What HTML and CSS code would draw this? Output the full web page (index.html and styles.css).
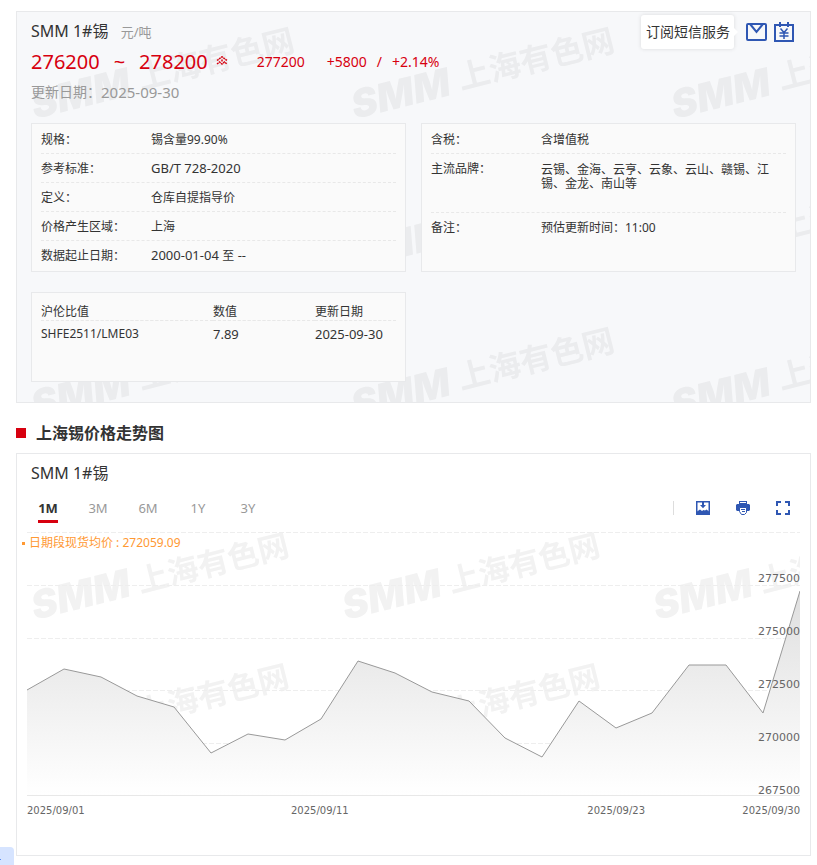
FILE: index.html
```html
<!DOCTYPE html>
<html lang="zh-CN">
<head>
<meta charset="utf-8">
<title>SMM 1#锡</title>
<link rel="stylesheet" href="styles.css">
</head>
<body>
<main class="page">
  <section class="card quote">
    <svg class="watermark" aria-hidden="true">
      <defs>
        <pattern id="mark-quote" width="320" height="150" patternUnits="userSpaceOnUse">
          <g transform="translate(18 107) rotate(-14)" fill="#ebecee">
            <text class="mark-logo" x="0" y="0">SMM</text>
            <text class="mark-name" x="110" y="-3">上海有色网</text>
          </g>
        </pattern>
      </defs>
      <rect width="100%" height="100%" fill="url(#mark-quote)"/>
    </svg>
    <header class="quote-head">
      <div class="quote-info">
        <h1 class="name">SMM 1#锡 <small class="unit">元/吨</small></h1>
        <div class="prices">
          <span class="range">276200</span><span class="range tilde">~</span><span class="range">278200</span>
          <svg class="rise" viewBox="0 0 12 12" aria-hidden="true"><path d="M1 4.500L6 .8l5 3.700M1 8l2.500-2L6 8l2.500-2L11 8M6 3.500v2" fill="none" stroke="#d7000f" stroke-width="1.500" stroke-dasharray="2 .6"/></svg>
          <span class="average">277200</span>
          <span class="change"><span>+5800</span><span>/</span><span>+2.14%</span></span>
        </div>
        <p class="updated"><span>更新日期：</span><time class="date">2025-09-30</time></p>
      </div>
      <div class="actions">
        <span class="tip">订阅短信服务</span>
        <button class="icon-button" type="button" aria-label="订阅短信服务">
          <svg width="21" height="18" viewBox="0 0 21 18" fill="none" stroke="#2f57b3" stroke-width="2"><rect x="1" y="1" width="19" height="16" rx="1"/><path d="M4 1l6.500 8L17 1"/></svg>
        </button>
        <button class="icon-button" type="button" aria-label="价格日历">
          <svg width="20" height="20" viewBox="0 0 20 20" fill="none" stroke="#2f57b3" stroke-width="2"><path d="M1 3h18v16H1zM6 0v5M14 0v5"/><path stroke-width="1.500" d="M6.500 6.500L10 10.500l3.500-4M10 10.500V17M5.500 11h9M5.500 14h9"/></svg>
        </button>
      </div>
    </header>
    <div class="boxes">
      <dl class="box">
        <div class="row"><dt>规格：</dt><dd>锡含量99.90%</dd></div>
        <div class="row"><dt>参考标准：</dt><dd class="latin">GB/T 728-2020</dd></div>
        <div class="row"><dt>定义：</dt><dd>仓库自提指导价</dd></div>
        <div class="row"><dt>价格产生区域：</dt><dd>上海</dd></div>
        <div class="row"><dt>数据起止日期：</dt><dd class="latin">2000-01-04 <span class="han">至</span> --</dd></div>
      </dl>
      <dl class="box">
        <div class="row"><dt>含税：</dt><dd>含增值税</dd></div>
        <div class="row brands"><dt>主流品牌：</dt><dd>云锡、金海、云亨、云象、云山、赣锡、江锡、金龙、南山等</dd></div>
        <div class="row"><dt>备注：</dt><dd>预估更新时间：11:00</dd></div>
      </dl>
      <div class="box ratio">
        <table>
          <thead><tr><th class="col-name">沪伦比值</th><th class="col-value">数值</th><th>更新日期</th></tr></thead>
          <tbody class="latin"><tr><td class="contract">SHFE2511/LME03</td><td>7.89</td><td>2025-09-30</td></tr></tbody>
        </table>
      </div>
    </div>
  </section>

  <h2 class="section-title">上海锡价格走势图</h2>

  <section class="card trend">
    <h3 class="name">SMM 1#锡</h3>
    <div class="toolbar">
      <div class="tabs">
        <button class="tab active" type="button">1M</button>
        <button class="tab" type="button">3M</button>
        <button class="tab" type="button">6M</button>
        <button class="tab" type="button">1Y</button>
        <button class="tab" type="button">3Y</button>
      </div>
      <div class="tools">
        <button class="icon-button" type="button" aria-label="下载图片">
          <svg width="14" height="14" viewBox="0 0 14 14"><path fill="none" stroke="#2f57b3" stroke-width="1.500" d="M.75.75h12.500v12.500H.75z"/><path fill="#2f57b3" d="M6 1h2v3h2L7 7.300 4 4h2zM1 13v-2.500l3-2 2 1.500 1.500-1 1.500.6 1.500-1.100L13 10.500V13z"/></svg>
        </button>
        <button class="icon-button" type="button" aria-label="打印">
          <svg width="14" height="14" viewBox="0 0 14 14"><path fill="#2f57b3" d="M3 0h8v3H3zM1 3h12l1 1v5l-1 1h-2V7H3v3H1L0 9V4z"/><path fill="#fff" d="M4 1h6v1H4z"/><path fill="#fff" stroke="#2f57b3" d="M3.500 6.500h7v5l-2 2h-3l-2-3z"/><path stroke="#2f57b3" d="M5 8.500h4M6 10.500h3"/></svg>
        </button>
        <button class="icon-button" type="button" aria-label="全屏">
          <svg width="14" height="14" viewBox="0 0 14 14" fill="none" stroke="#2f57b3" stroke-width="2"><path d="M1 5V1h4M9 1h4v4M13 9v4H9M5 13H1V9"/></svg>
        </button>
      </div>
    </div>
    <div class="chart">
      <svg class="watermark" aria-hidden="true">
        <defs>
          <pattern id="mark-trend" width="311" height="131" patternUnits="userSpaceOnUse">
            <g transform="translate(8 88) rotate(-14)" fill="#f2f2f2">
              <text class="mark-logo" x="0" y="0">SMM</text>
              <text class="mark-name small" x="109" y="-1">上海有色网</text>
            </g>
          </pattern>
        </defs>
        <rect width="100%" height="100%" fill="url(#mark-trend)"/>
        <g stroke="#eee" stroke-dasharray="5 2">
          <line x1="0" x2="100%" y1="0.500" y2="0.500"/>
          <line x1="0" x2="100%" y1="53.500" y2="53.500"/>
          <line x1="0" x2="100%" y1="106.500" y2="106.500"/>
          <line x1="0" x2="100%" y1="158.500" y2="158.500"/>
          <line x1="0" x2="100%" y1="211.500" y2="211.500"/>
        </g>
      </svg>
      <svg class="series" viewBox="0 0 773 263" preserveAspectRatio="none" role="img" aria-label="价格走势">
        <defs><linearGradient id="fade" gradientUnits="userSpaceOnUse" x1="0" y1="59" x2="0" y2="263"><stop offset="0" stop-color="#dfdfdf"/><stop offset="1" stop-color="#fff"/></linearGradient></defs>
        <path fill="url(#fade)" d="M0 263V158L37 137 74 145 110 164 147 175 184 221 221 202 258 208 294 187 331 129 368 141 405 160 442 169 478 206 515 225 552 169 589 196 625 181 662 133H699L736 181 773 59V263z"/>
        <path class="line" d="M0 158L37 137 74 145 110 164 147 175 184 221 221 202 258 208 294 187 331 129 368 141 405 160 442 169 478 206 515 225 552 169 589 196 625 181 662 133H699L736 181 773 59"/>
      </svg>
      <p class="period-average">日期段现货均价 : 272059.09</p>
      <ol class="scale"><li>277500</li><li>275000</li><li>272500</li><li>270000</li><li>267500</li></ol>
    </div>
    <div class="dates"><time>2025/09/01</time><time>2025/09/11</time><time>2025/09/23</time><time>2025/09/30</time></div>
  </section>
</main>
<div class="corner"></div>
</body>
</html>
```
FILE: styles.css
```css
* { box-sizing: border-box; }
body, h1, h2, h3, p, dl, dd, ol { margin: 0; padding: 0; }
body { font: 12px/16px "Noto Sans", "Noto Sans CJK SC", sans-serif; color: #333; background: #fff; }
button { padding: 0; border: 0; background: none; font: inherit; color: inherit; cursor: pointer; }
.latin { font-size: 13px; }
.han, .contract { font-size: 12px; }

.page { padding: 11px 6px 9px 16px; }
.card { position: relative; border: 1px solid #e8e9eb; }
.watermark { position: absolute; inset: 0; width: 100%; height: 100%; }
.mark-logo { font: italic 900 39px "Inter", sans-serif; }
.mark-name { font: bold 32px "Noto Sans CJK SC", sans-serif; }
.mark-name.small { font-size: 31px; }
.name { font-size: 16px; line-height: 24px; font-weight: 400; }

.quote { padding: 7px 14px 20px; background: #f7f8fa; }
.quote-head { position: relative; display: flex; justify-content: space-between; height: 104px; }
.unit { margin-left: 8px; font-size: 13px; color: #999; }
.prices { display: flex; align-items: center; height: 36px; color: #d7000f; }
.range { font-size: 20px; line-height: 28px; }
.tilde { margin: 0 14px; }
.rise { width: 12px; height: 12px; margin: 0 29px 0 8px; }
.average, .change { font-size: 14px; line-height: 20px; }
.average { margin-right: 22px; }
.change { display: flex; gap: 10px; }
.updated { display: flex; font-size: 14px; line-height: 24px; color: #999; }
.date { font-size: 15px; }
.actions { display: flex; align-items: center; gap: 7px; height: 26px; }
.icon-button { display: flex; }
.actions .icon-button:last-child { margin-right: 2px; }
.tip { position: relative; margin-right: 5px; padding: 7px 4px 7px 5px; border-radius: 3px; background: #fff; box-shadow: 0 0 4px rgba(0, 0, 0, .12); font-size: 14px; line-height: 20px; }
.tip::after { content: ""; position: absolute; top: 13px; right: -4px; border: solid transparent; border-width: 4px 0 4px 4px; border-left-color: #fff; }

.boxes { position: relative; display: grid; grid-template-columns: 1fr 1fr; gap: 20px 15px; }
.box { padding: 1px 9px; border: 1px solid #e8e9eb; background: #fafafa; }
.row { display: flex; height: 29px; padding-top: 7px; border-bottom: 1px dashed #e8e8e8; }
.row:last-child { border-bottom: 0; }
.row dt { flex: 0 0 110px; }
.row .latin { line-height: 14px; }
.brands { height: 59px; }
.brands dd { padding: 2px 12px 0 0; line-height: 14px; }
.ratio { height: 90px; padding-top: 8px; }
table { width: 100%; border-collapse: collapse; table-layout: fixed; }
th, td { padding: 0; text-align: left; font-weight: 400; }
th { height: 19px; padding-top: 3px; border-bottom: 1px dashed #e8e8e8; line-height: 16px; }
td { height: 26px; }
.col-name { width: 172px; }
.col-value { width: 102px; }

.section-title { display: flex; align-items: center; gap: 10px; height: 50px; padding-top: 10px; font-size: 16px; line-height: 24px; }
.section-title::before { content: ""; width: 10px; height: 10px; background: #d7000f; }

.trend { padding: 7px 10px 36px; }
.trend .name { padding-left: 4px; }
.toolbar { display: flex; justify-content: space-between; height: 47px; padding: 11px 10px 0 11px; }
.tabs { display: flex; gap: 30px; }
.tab { width: 20px; height: 27px; border-bottom: 3px solid transparent; color: #999; font-size: 13px; line-height: 24px; white-space: nowrap; }
.active { border-bottom-color: #d7000f; color: #333; font-weight: 700; }
.tools { display: flex; align-items: center; gap: 26px; height: 14px; margin-top: 5px; padding-left: 22px; border-left: 1px solid #ddd; }

.chart { position: relative; height: 264px; border-bottom: 1px solid #e8e8e8; }
.series { position: absolute; inset: 0; width: 100%; height: 100%; }
.line { fill: none; stroke: #999; stroke-width: 1; vector-effect: non-scaling-stroke; }
.period-average { position: absolute; top: 3px; left: -5px; display: flex; align-items: center; gap: 4px; color: #ff9933; white-space: nowrap; }
.period-average::before { content: ""; width: 3px; height: 3px; background: #ff9933; }
.scale { position: absolute; top: 39px; right: 0; display: grid; grid-auto-rows: 16px; row-gap: 37px; list-style: none; color: #666; font-family: "DejaVu Sans", sans-serif; font-size: 11px; }
.dates { display: grid; grid-template-columns: 264px 1fr auto 60px; padding-top: 7px; color: #666; font: 10px/16px "DejaVu Sans", sans-serif; }
.dates time:nth-child(3) { margin-right: 95px; }
.dates time:last-child { text-align: right; }
.corner { position: fixed; left: 0; bottom: 0; width: 14px; height: 18px; border-radius: 0 4px 0 0; background: #d6e4ff; }
.corner::after { content: ""; position: absolute; left: 0; bottom: 5px; width: 1px; height: 1px; background: #5b8def; }
```
